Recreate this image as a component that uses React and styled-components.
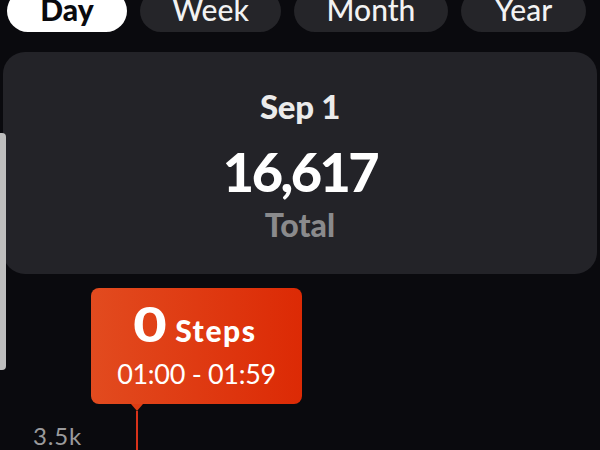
import React from "react";
import styled, { createGlobalStyle } from "styled-components";

const GlobalStyle = createGlobalStyle`
  html, body {
    margin: 0;
    padding: 0;
    background: #0a0a0e;
    overflow: hidden;
  }
  body {
    font-family: "Lato", "Inter", sans-serif;
  }
`;

// pill widths taken from the design
const tabs = [
  { label: "Day", w: 120 },
  { label: "Week", w: 141 },
  { label: "Month", w: 154 },
  { label: "Year", w: 125 },
];

export default function App() {
  return (
    <Screen>
      <GlobalStyle />
      <EdgeHandle />
      <Tabs>
        {tabs.map((t, i) => (
          <Tab key={t.label} active={i === 0} w={t.w}>
            {t.label}
          </Tab>
        ))}
      </Tabs>

      <SummaryCard>
        <DateLabel>Sep 1</DateLabel>
        <Total>16,617</Total>
        <TotalLabel>Total</TotalLabel>
      </SummaryCard>

      <Chart>
        <Tooltip>
          <TipValue>
            <Big>0</Big>
            <Unit>Steps</Unit>
          </TipValue>
          <TipRange>01:00 - 01:59</TipRange>
        </Tooltip>
        <Marker />
        <AxisLabel>3.5k</AxisLabel>
      </Chart>
    </Screen>
  );
}

const Screen = styled.div`
  position: relative;
  width: 600px;
  height: 450px;
  overflow: hidden;
  background: #0a0a0e;
  color: #fff;
`;

const EdgeHandle = styled.div`
  position: absolute;
  left: 0;
  top: 133px;
  width: 6px;
  height: 237px;
  background: #bebebe;
  border-radius: 0 4px 4px 0;
  z-index: 3;
`;

const Tabs = styled.div`
  display: flex;
  gap: 13px;
  padding: 0 0 0 7px;
  margin-top: -10px;
`;

const Tab = styled.div`
  width: ${(p) => p.w}px;
  height: 42px;
  border-radius: 21px;
  display: flex;
  align-items: center;
  justify-content: center;
  box-sizing: border-box;
  padding-bottom: 5px;
  font-size: 30px;
  line-height: 32px;
  font-weight: ${(p) => (p.active ? 900 : 500)};
  background: ${(p) => (p.active ? "#ffffff" : "#252529")};
  color: ${(p) => (p.active ? "#0a0a0e" : "#f2f2f2")};
`;

const SummaryCard = styled.div`
  margin: 20px 3px 0 3px;
  height: 222px;
  box-sizing: border-box;
  border-radius: 22px;
  background: #232328;
  display: flex;
  flex-direction: column;
  align-items: center;
  padding-top: 34px;
`;

const DateLabel = styled.div`
  font-size: 33px;
  font-weight: 900;
  color: #ebebeb;
  letter-spacing: -0.3px;
  line-height: 40px;
`;

const Total = styled.div`
  margin-top: 17px;
  font-size: 54px;
  font-weight: 900;
  color: #ffffff;
  letter-spacing: -2.5px;
  line-height: 58px;
`;

const TotalLabel = styled.div`
  margin-top: 4px;
  font-size: 32px;
  font-weight: 900;
  color: #8a8a8c;
  line-height: 40px;
`;

const Chart = styled.div`
  position: relative;
  height: 176px;
  padding-left: 33px;
  box-sizing: border-box;
  display: flex;
  align-items: flex-end;
`;

const AxisLabel = styled.div`
  font-size: 24px;
  color: #9a9a9c;
  line-height: 28px;
  letter-spacing: 0.8px;
`;

const Tooltip = styled.div`
  position: absolute;
  left: 91px;
  top: 14px;
  width: 211px;
  height: 116px;
  box-sizing: border-box;
  border-radius: 8px;
  background: linear-gradient(90deg, #e24b1f 0%, #dc2a05 100%);
  display: flex;
  flex-direction: column;
  align-items: center;
  padding-top: 14px;
  z-index: 2;

  &::after {
    content: "";
    position: absolute;
    left: 40px;
    bottom: -7px;
    border-left: 6px solid transparent;
    border-right: 6px solid transparent;
    border-top: 7px solid #df3d13;
  }
`;

const TipValue = styled.div`
  display: flex;
  align-items: baseline;
  gap: 11px;
  line-height: 44px;
`;

const Big = styled.span`
  font-size: 48px;
  font-weight: 900;
  transform: scaleX(1.2);
  display: inline-block;
`;

const Unit = styled.span`
  font-size: 30px;
  font-weight: 900;
  letter-spacing: 1.6px;
`;

const TipRange = styled.div`
  margin-top: 6px;
  font-size: 27px;
  font-weight: 400;
  line-height: 32px;
  letter-spacing: -0.3px;
`;

const Marker = styled.div`
  position: absolute;
  left: 136px;
  top: 137px;
  bottom: 0;
  width: 2px;
  background: #d8321a;
`;
